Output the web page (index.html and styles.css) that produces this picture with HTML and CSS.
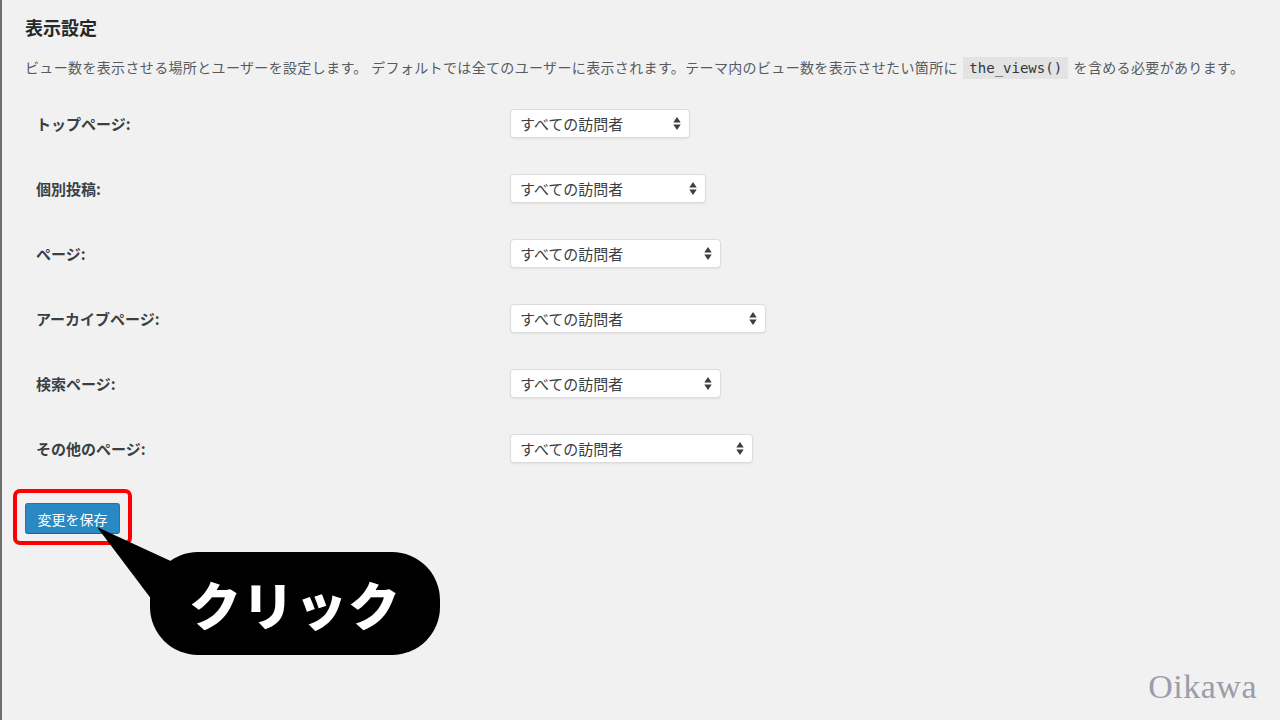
FILE: index.html
```html
<!DOCTYPE html>
<html lang="ja">
<head>
    <meta charset="UTF-8">
    <meta name="viewport" content="width=device-width, initial-scale=1.0">
    <title>表示設定</title>
    <link rel="stylesheet" href="styles.css">
</head>
<body>
    <div class="wrap">
        <h2>表示設定</h2>
        <p class="description">ビュー数を表示させる場所とユーザーを設定します。 デフォルトでは全てのユーザーに表示されます。テーマ内のビュー数を表示させたい箇所に <code>the_views()</code> を含める必要があります。</p>

        <div class="form-table">
            <div class="form-row">
                <label for="home">トップページ:</label>
                <div class="select-wrap w-180">
                    <select id="home"><option>すべての訪問者</option></select>
                    <svg class="arrows" viewBox="0 0 8 14"><path d="M0 6 L4 0 L8 6 Z M0 8 L8 8 L4 14 Z"/></svg>
                </div>
            </div>
            <div class="form-row">
                <label for="single">個別投稿:</label>
                <div class="select-wrap w-196">
                    <select id="single"><option>すべての訪問者</option></select>
                    <svg class="arrows" viewBox="0 0 8 14"><path d="M0 6 L4 0 L8 6 Z M0 8 L8 8 L4 14 Z"/></svg>
                </div>
            </div>
            <div class="form-row">
                <label for="page">ページ:</label>
                <div class="select-wrap w-211">
                    <select id="page"><option>すべての訪問者</option></select>
                    <svg class="arrows" viewBox="0 0 8 14"><path d="M0 6 L4 0 L8 6 Z M0 8 L8 8 L4 14 Z"/></svg>
                </div>
            </div>
            <div class="form-row">
                <label for="archive">アーカイブページ:</label>
                <div class="select-wrap w-256">
                    <select id="archive"><option>すべての訪問者</option></select>
                    <svg class="arrows" viewBox="0 0 8 14"><path d="M0 6 L4 0 L8 6 Z M0 8 L8 8 L4 14 Z"/></svg>
                </div>
            </div>
            <div class="form-row">
                <label for="search">検索ページ:</label>
                <div class="select-wrap w-211">
                    <select id="search"><option>すべての訪問者</option></select>
                    <svg class="arrows" viewBox="0 0 8 14"><path d="M0 6 L4 0 L8 6 Z M0 8 L8 8 L4 14 Z"/></svg>
                </div>
            </div>
            <div class="form-row">
                <label for="other">その他のページ:</label>
                <div class="select-wrap w-243">
                    <select id="other"><option>すべての訪問者</option></select>
                    <svg class="arrows" viewBox="0 0 8 14"><path d="M0 6 L4 0 L8 6 Z M0 8 L8 8 L4 14 Z"/></svg>
                </div>
            </div>
        </div>

        <div class="highlight">
            <button class="button-primary">変更を保存</button>
        </div>
    </div>

    <svg class="callout-tail" viewBox="0 0 100 90"><polygon points="7,7 85,43 62,80"/></svg>
    <div class="callout">クリック</div>

    <div class="watermark">Oikawa</div>
</body>
</html>
```

FILE: styles.css
```css
* {
    margin: 0;
    padding: 0;
    box-sizing: border-box;
}

html, body {
    height: 100%;
}

body {
    position: relative;
    overflow: hidden;
    background-color: #f1f1f1;
    border-left: 2px solid #6f6f6f;
    color: #23282d;
    font-family: "Noto Sans CJK JP", "Noto Sans", sans-serif;
}

.wrap {
    padding: 16px 0 0 23px;
}

h2 {
    font-size: 18px;
    font-weight: 700;
    line-height: 23px;
    color: #23282d;
}

.description {
    margin-top: 16px;
    font-size: 14px;
    line-height: 24px;
    letter-spacing: 0.35px;
    color: #555b61;
    white-space: nowrap;
}

code {
    font-family: "DejaVu Sans Mono", monospace;
    font-size: 14px;
    letter-spacing: 0;
    padding: 3px 6px;
    margin: 0 2px;
    background-color: #e3e3e3;
    color: #32373c;
}

.form-table {
    margin-top: 11px;
}

.form-row {
    display: grid;
    grid-template-columns: 474px auto;
    align-items: center;
    height: 65px;
    padding-left: 11px;
}

.form-row label {
    font-size: 15px;
    font-weight: 700;
    color: #3a3f44;
}

.select-wrap {
    position: relative;
    height: 29px;
}

.select-wrap select {
    appearance: none;
    -webkit-appearance: none;
    width: 100%;
    height: 100%;
    padding: 0 26px 0 9px;
    font-family: "Noto Sans CJK JP", "Noto Sans", sans-serif;
    font-size: 15px;
    color: #3a3f44;
    background-color: #fff;
    border: 1px solid #dcdcdc;
    border-radius: 4px;
    box-shadow: 0 1px 2px rgba(0, 0, 0, 0.07);
}

.arrows {
    position: absolute;
    right: 9px;
    top: 8px;
    width: 8px;
    height: 13px;
    fill: #3a3f44;
}

.w-180 { width: 180px; }
.w-196 { width: 196px; }
.w-211 { width: 211px; }
.w-243 { width: 243px; }
.w-256 { width: 256px; }

.highlight {
    display: inline-block;
    margin: 8px 0 0 -12px;
    padding: 10px 8px 7px 8px;
    border: 4px solid #ff0000;
    border-radius: 7px;
}

.button-primary {
    display: block;
    width: 95px;
    height: 31px;
    font-family: "Noto Sans CJK JP", "Noto Sans", sans-serif;
    font-size: 14px;
    color: #fff;
    background-color: #2a88c2;
    border: 1px solid #1f78ad;
    border-bottom-color: #16679a;
    border-radius: 3px;
    cursor: pointer;
}

.callout-tail {
    position: absolute;
    left: 88px;
    top: 520px;
    width: 100px;
    height: 90px;
    fill: #000;
}

.callout {
    position: absolute;
    left: 148px;
    top: 552px;
    width: 290px;
    height: 103px;
    display: flex;
    align-items: center;
    justify-content: center;
    background-color: #000;
    border-radius: 48px;
    color: #fff;
    font-size: 52px;
    font-weight: 900;
    letter-spacing: 1px;
}

.watermark {
    position: absolute;
    right: 23px;
    bottom: 14px;
    font-family: "Liberation Serif", serif;
    font-size: 34px;
    color: #9c9cab;
    letter-spacing: 0.5px;
}
```
